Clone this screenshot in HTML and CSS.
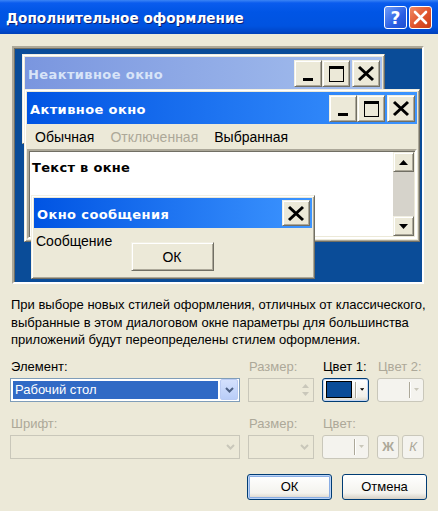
FILE: index.html
```html
<!DOCTYPE html>
<html lang="ru">
<head>
    <meta charset="UTF-8">
    <title>Дополнительное оформление</title>
    <link rel="stylesheet" href="styles.css">
</head>
<body>

    <div class="dialog">
        <!-- заголовок окна -->
        <div class="caption">
            <span class="caption-text">Дополнительное оформление</span>
            <div class="caption-btns">
                <div class="cap-btn help">?</div>
                <div class="cap-btn close">
                    <svg width="15" height="15" viewBox="0 0 15 15"><path d="M2 2L13 13M13 2L2 13" stroke="#fff" stroke-width="2.6" stroke-linecap="round"/></svg>
                </div>
            </div>
        </div>

        <div class="content">
            <!-- образец -->
            <div class="preview">
                <div class="win inactive">
                    <div class="wtitle">
                        <span>Неактивное окно</span>
                        <div class="wbtns">
                            <div class="tb"><svg width="18" height="17" viewBox="0 0 18 17"><rect x="4" y="13" width="10" height="3"/></svg></div>
                            <div class="tb"><svg width="18" height="17" viewBox="0 0 18 17"><path d="M2 1h15v16H2z M3 4v12h13V4z" fill-rule="evenodd"/></svg></div>
                            <div class="tb gap"><svg width="18" height="17" viewBox="0 0 18 17"><path d="M2 2L16 15M16 2L2 15" stroke="#000" stroke-width="3"/></svg></div>
                        </div>
                    </div>
                </div>

                <div class="win active">
                    <div class="wtitle">
                        <span>Активное окно</span>
                        <div class="wbtns">
                            <div class="tb"><svg width="18" height="17" viewBox="0 0 18 17"><rect x="4" y="13" width="10" height="3"/></svg></div>
                            <div class="tb"><svg width="18" height="17" viewBox="0 0 18 17"><path d="M2 1h15v16H2z M3 4v12h13V4z" fill-rule="evenodd"/></svg></div>
                            <div class="tb gap"><svg width="18" height="17" viewBox="0 0 18 17"><path d="M2 2L16 15M16 2L2 15" stroke="#000" stroke-width="3"/></svg></div>
                        </div>
                    </div>
                    <div class="menu">
                        <span>Обычная</span>
                        <span class="off">Отключенная</span>
                        <span>Выбранная</span>
                    </div>
                    <div class="client">
                        <div class="client-text">Текст в окне</div>
                        <div class="vscroll">
                            <div class="sbtn"><svg width="9" height="5" viewBox="0 0 9 5"><path d="M0 5L4.5 0L9 5z"/></svg></div>
                            <div class="track"></div>
                            <div class="sbtn"><svg width="9" height="5" viewBox="0 0 9 5"><path d="M0 0L4.5 5L9 0z"/></svg></div>
                        </div>
                    </div>
                </div>

                <div class="win msg">
                    <div class="wtitle">
                        <span>Окно сообщения</span>
                        <div class="tb"><svg width="18" height="17" viewBox="0 0 18 17"><path d="M2 2L16 15M16 2L2 15" stroke="#000" stroke-width="3"/></svg></div>
                    </div>
                    <div class="msg-body">
                        <div>Сообщение</div>
                        <div class="msg-ok">ОК</div>
                    </div>
                </div>
            </div>

            <p class="note">При выборе новых стилей оформления, отличных от классического, выбранные в этом диалоговом окне параметры для большинства приложений будут переопределены стилем оформления.</p>

            <!-- параметры элемента -->
            <div class="fields">
                <div class="field">
                    <label>Элемент:</label>
                    <div class="combo">
                        <span class="combo-sel">Рабочий стол</span>
                        <div class="drop"><svg width="9" height="6" viewBox="0 0 9 6"><path d="M1 1l3.5 3.5L8 1" fill="none" stroke="#4d6185" stroke-width="2"/></svg></div>
                    </div>
                </div>
                <div class="field">
                    <label class="off">Размер:</label>
                    <div class="box spin">
                        <div class="spin-btns">
                            <svg width="7" height="4" viewBox="0 0 7 4"><path d="M0 4L3.5 0L7 4z" fill="#c9c7ba"/></svg>
                            <svg width="7" height="4" viewBox="0 0 7 4"><path d="M0 0L3.5 4L7 0z" fill="#c9c7ba"/></svg>
                        </div>
                    </div>
                </div>
                <div class="field">
                    <label>Цвет 1:</label>
                    <div class="colorbtn">
                        <span class="swatch"></span>
                        <span class="sep"></span>
                        <svg width="5" height="3" viewBox="0 0 5 3"><path d="M0 0h5L2.5 3z"/></svg>
                    </div>
                </div>
                <div class="field">
                    <label class="off">Цвет 2:</label>
                    <div class="colorbtn disabled">
                        <span class="sep"></span>
                        <svg width="5" height="3" viewBox="0 0 5 3"><path d="M0 0h5L2.5 3z" fill="#c9c7ba"/></svg>
                    </div>
                </div>

                <div class="field">
                    <label class="off">Шрифт:</label>
                    <div class="box dcombo">
                        <div class="ddrop"><svg width="9" height="6" viewBox="0 0 9 6"><path d="M1 1l3.5 3.5L8 1" fill="none" stroke="#c9c7ba" stroke-width="2"/></svg></div>
                    </div>
                </div>
                <div class="field">
                    <label class="off">Размер:</label>
                    <div class="box dcombo">
                        <div class="ddrop"><svg width="9" height="6" viewBox="0 0 9 6"><path d="M1 1l3.5 3.5L8 1" fill="none" stroke="#c9c7ba" stroke-width="2"/></svg></div>
                    </div>
                </div>
                <div class="field">
                    <label class="off">Цвет:</label>
                    <div class="colorbtn disabled">
                        <span class="sep"></span>
                        <svg width="5" height="3" viewBox="0 0 5 3"><path d="M0 0h5L2.5 3z" fill="#c9c7ba"/></svg>
                    </div>
                </div>
                <div class="field">
                    <label>&nbsp;</label>
                    <div class="styles">
                        <div class="sbtn-d bold">Ж</div>
                        <div class="sbtn-d italic">К</div>
                    </div>
                </div>
            </div>

            <div class="actions">
                <div class="btn default">ОК</div>
                <div class="btn">Отмена</div>
            </div>
        </div>
    </div>

</body>
</html>
```

FILE: styles.css
```css
body {
    margin: 0;
    background: #ece9d8;
    font-family: 'Liberation Sans', Arial, sans-serif;
    font-size: 13px;
    color: #000;
}
.dialog {
    width: 438px;
    height: 511px;
    background: #ece9d8;
    overflow: hidden;
}
.caption {
    height: 34px;
    display: flex;
    align-items: center;
    justify-content: space-between;
    padding: 0 6px 0 6px;
    box-sizing: border-box;
    background: linear-gradient(#3b84f5 0, #0a5cee 3px, #0055e5 12px, #0053e0 26px, #0048cc 31px, #0040b8 34px);
}
.caption-text {
    font-family: 'DejaVu Sans', sans-serif;
    font-weight: bold;
    font-size: 13.6px;
    color: #fff;
    text-shadow: 1px 1px 0 #0a1e6e;
    margin-top: 1px;
}
.caption-btns {
    display: flex;
    gap: 2px;
    margin-top: 1px;
}
.cap-btn {
    width: 23px;
    height: 23px;
    box-sizing: border-box;
    border: 1px solid #fff;
    border-radius: 3px;
    display: flex;
    align-items: center;
    justify-content: center;
}
.cap-btn.help {
    background: linear-gradient(135deg, #6f9cf8, #2a5fe4 60%, #1e4fd0);
    color: #fff;
    font-family: 'DejaVu Sans', sans-serif;
    font-weight: bold;
    font-size: 17px;
}
.cap-btn.close {
    background: linear-gradient(135deg, #f08a64, #e0532c 55%, #c93d17);
}

.content {
    padding: 12px 11px 0 10px;
}

/* образец */
.preview {
    position: relative;
    margin-left: 2px;
    width: 412px;
    height: 238px;
    box-sizing: border-box;
    border: 2px solid;
    border-color: #aca899 #fff #fff #aca899;
    box-shadow: inset 1px 1px #716f64;
    background: #0a4c98;
}
.win {
    position: absolute;
    box-sizing: border-box;
    background: #ece9d8;
    border: 1px solid;
    border-color: #f1efe2 #716f64 #716f64 #f1efe2;
    box-shadow: inset 1px 1px #fff, inset -1px -1px #aca899;
    padding: 2px;
}
.win.inactive {
    left: 8px;
    top: 6px;
    width: 363px;
    height: 90px;
}
.win.active {
    left: 10px;
    top: 41px;
    width: 396px;
    height: 153px;
    display: flex;
    flex-direction: column;
}
.win.msg {
    left: 17px;
    top: 147px;
    width: 284px;
    height: 84px;
}
.wtitle {
    height: 32px;
    display: flex;
    align-items: center;
    justify-content: space-between;
    padding: 0 2px 0 3px;
    font-family: 'DejaVu Sans', sans-serif;
    font-weight: bold;
    font-size: 13px;
    letter-spacing: 0.4px;
    color: #fff;
    background: linear-gradient(to right, #0054e3, #3d95ff);
}
.wtitle > span {
    margin-top: 2px;
}
.inactive .wtitle {
    color: #d8e4f8;
    background: linear-gradient(to right, #7a96df, #a6c0ee);
}
.msg .wtitle {
    height: 30px;
}
.wbtns {
    display: flex;
}
.tb {
    width: 28px;
    height: 27px;
    box-sizing: border-box;
    background: #ece9d8;
    border: 1px solid;
    border-color: #f1efe2 #716f64 #716f64 #f1efe2;
    box-shadow: inset 1px 1px #fff, inset -1px -1px #aca899;
    display: flex;
    align-items: center;
    justify-content: center;
}
.msg .tb {
    height: 26px;
}
.tb.gap {
    margin-left: 2px;
}
.menu {
    height: 25px;
    display: flex;
    align-items: center;
    font-size: 14px;
    padding-left: 0;
}
.menu span {
    padding: 0 8px;
}
.off {
    color: #aca899;
}
.client {
    flex: 1;
    display: flex;
    background: #fff;
    border: 2px solid;
    border-color: #aca899 #fff #fff #aca899;
    box-shadow: inset 1px 1px #716f64, inset -1px -1px #ece9d8;
    padding: 1px 1px 1px 1px;
}
.client-text {
    flex: 1;
    padding: 8px 2px;
    font-family: 'DejaVu Sans', sans-serif;
    font-weight: bold;
    font-size: 13px;
    letter-spacing: 0.3px;
}
.vscroll {
    width: 21px;
    display: flex;
    flex-direction: column;
}
.sbtn {
    height: 20px;
    box-sizing: border-box;
    background: #ece9d8;
    border: 1px solid;
    border-color: #f1efe2 #716f64 #716f64 #f1efe2;
    box-shadow: inset 1px 1px #fff, inset -1px -1px #aca899;
    display: flex;
    align-items: center;
    justify-content: center;
}
.track {
    flex: 1;
    background: #d6d3cb;
}
.msg-body {
    display: flex;
    flex-direction: column;
    padding: 5px 2px 0;
    font-size: 14px;
    line-height: 16px;
}
.msg-ok {
    align-self: center;
    margin-top: -7px;
    margin-right: 2px;
    width: 83px;
    height: 29px;
    box-sizing: border-box;
    border: 1px solid;
    border-color: #f1efe2 #716f64 #716f64 #f1efe2;
    box-shadow: inset 1px 1px #fff, inset -1px -1px #aca899;
    display: flex;
    align-items: center;
    justify-content: center;
}

.note {
    margin: 12px 0 0 1px;
    width: 415px;
    line-height: 17.5px;
}

/* параметры */
.fields {
    margin-top: 10px;
    display: grid;
    grid-template-columns: 230px 66px 47px 47px;
    column-gap: 8px;
    row-gap: 14px;
}
.field {
    display: flex;
    flex-direction: column;
    gap: 3px;
}
label {
    line-height: 16px;
    padding-left: 1px;
}
.combo {
    height: 24px;
    box-sizing: border-box;
    border: 1px solid #7f9db9;
    background: #fff;
    display: flex;
    align-items: center;
    padding: 2px 1px 2px 2px;
}
.combo-sel {
    flex: 1;
    align-self: stretch;
    display: flex;
    align-items: center;
    padding-left: 2px;
    background: #316ac5;
    color: #fff;
}
.drop {
    width: 18px;
    height: 21px;
    margin-left: 2px;
    box-sizing: border-box;
    border: 1px solid #bacbf3;
    border-radius: 2px;
    background: linear-gradient(#d4e1fd, #b9cdf8);
    display: flex;
    align-items: center;
    justify-content: center;
}
.box {
    height: 24px;
    box-sizing: border-box;
    border: 1px solid #c9c7ba;
    display: flex;
    justify-content: flex-end;
}
.spin-btns {
    width: 16px;
    display: flex;
    flex-direction: column;
    align-items: center;
    justify-content: center;
    gap: 4px;
}
.ddrop {
    width: 18px;
    display: flex;
    align-items: center;
    justify-content: center;
}
.colorbtn {
    height: 24px;
    box-sizing: border-box;
    border: 1px solid #003c74;
    border-radius: 3px;
    background: linear-gradient(#fff, #f0efe9 80%, #dcd8c9);
    box-shadow: inset 0 0 0 1px #c4d6f4;
    display: flex;
    align-items: center;
    padding: 0 4px 0 3px;
}
.colorbtn.disabled {
    border-color: #c9c7ba;
    background: #f4f3ee;
    box-shadow: none;
    justify-content: flex-end;
}
.swatch {
    width: 28px;
    height: 15px;
    border: 1px solid #000;
    background: #0a4c98;
}
.sep {
    width: 1px;
    height: 16px;
    margin: 0 4px 0 3px;
    background: #aca899;
    box-shadow: 1px 0 #fff;
}
.styles {
    display: flex;
    gap: 3px;
}
.sbtn-d {
    width: 22px;
    height: 24px;
    box-sizing: border-box;
    border: 1px solid #c9c7ba;
    border-radius: 3px;
    background: #f4f3ee;
    color: #aca899;
    display: flex;
    align-items: center;
    justify-content: center;
}
.sbtn-d.bold {
    font-weight: bold;
}
.sbtn-d.italic {
    font-style: italic;
}

.actions {
    margin-top: 15px;
    display: flex;
    justify-content: flex-end;
    gap: 10px;
}
.btn {
    width: 85px;
    height: 26px;
    box-sizing: border-box;
    border: 1px solid #003c74;
    border-radius: 3px;
    background: linear-gradient(#fff, #f4f3ee 75%, #d6d0c5);
    display: flex;
    align-items: center;
    justify-content: center;
}
.btn.default {
    box-shadow: inset 0 0 0 1px #bcd4f6, inset 0 0 0 2px #89ade4;
}
```
